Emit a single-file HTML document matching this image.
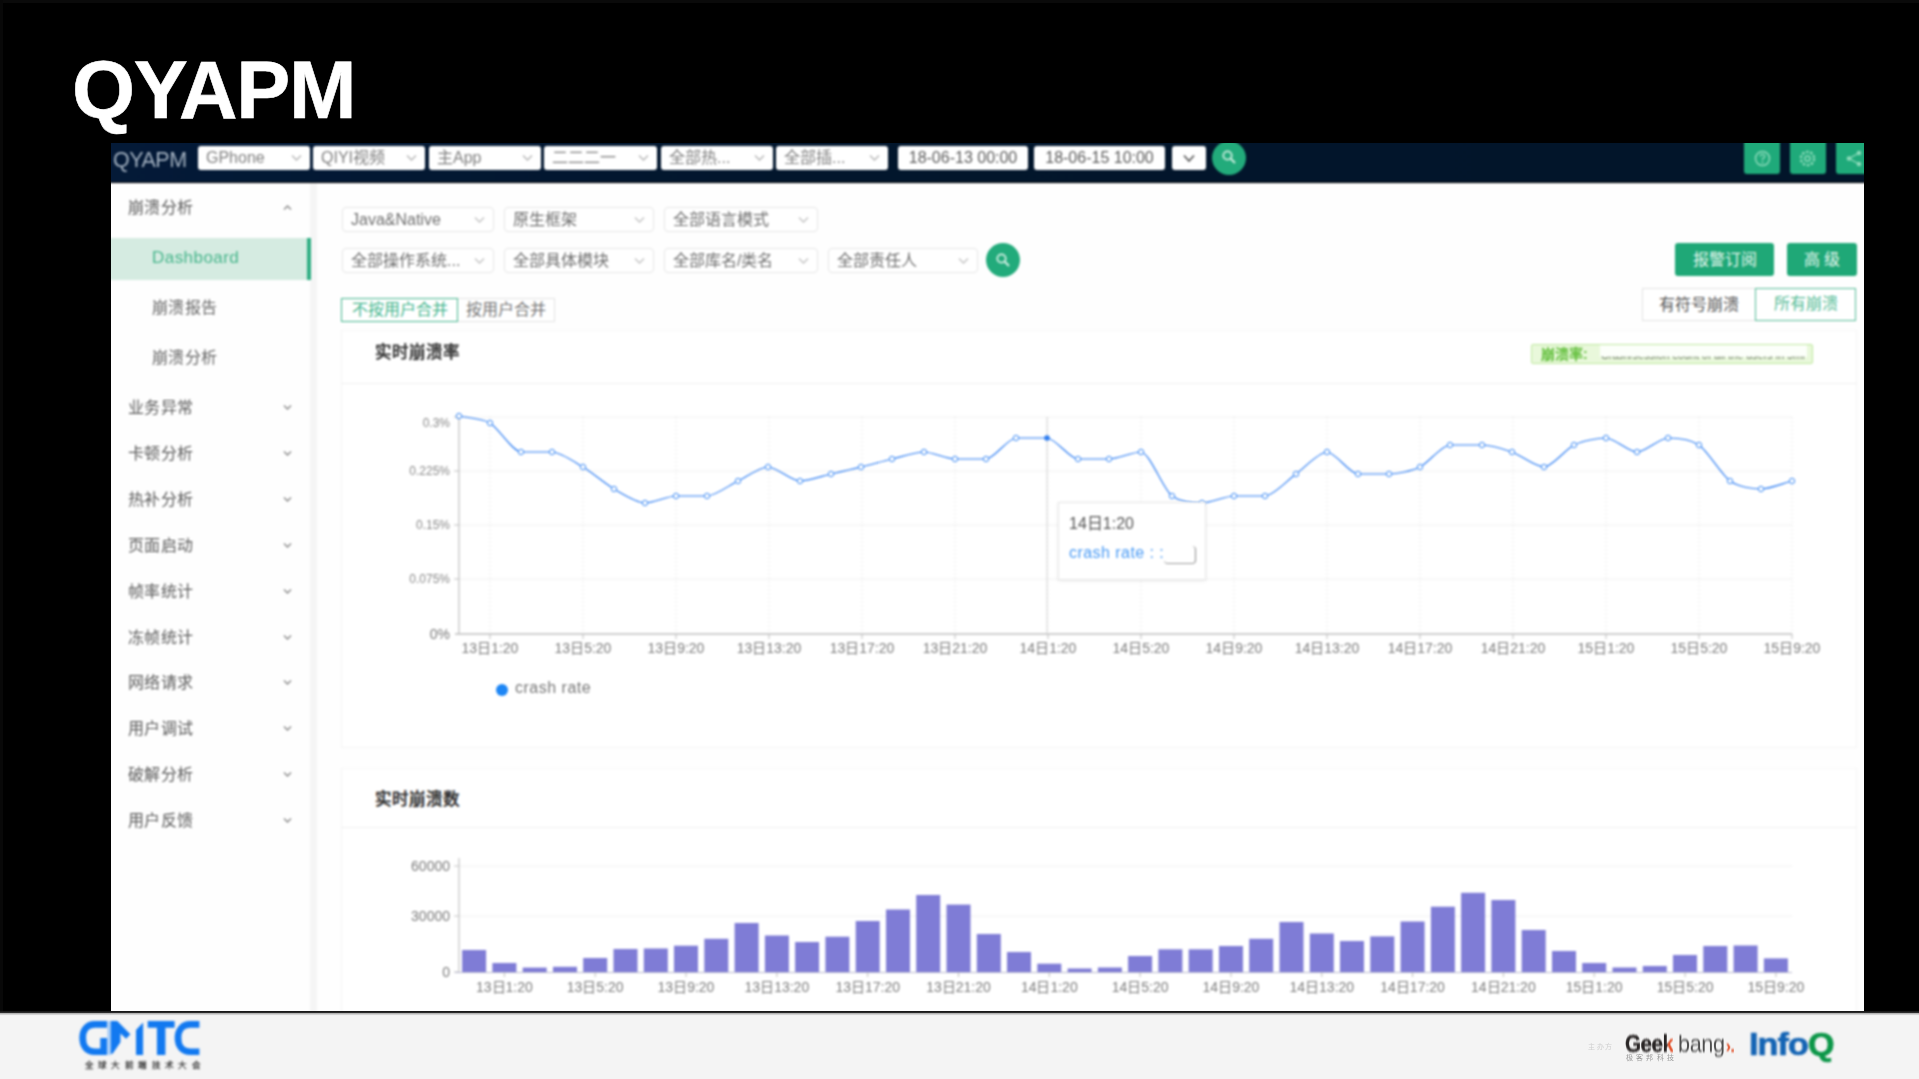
<!DOCTYPE html>
<html lang="zh-CN">
<head>
<meta charset="utf-8">
<title>QYAPM</title>
<style>
*{box-sizing:border-box;margin:0;padding:0}
html,body{width:1919px;height:1079px;overflow:hidden;background:#000}
body{position:relative;font-family:"Liberation Sans",sans-serif;color:#555}
body:before{content:"";position:absolute;left:0;top:0;width:1919px;height:2.5px;background:#0a0a0a}
body:after{content:"";position:absolute;left:0;top:0;width:2.5px;height:1011px;background:#080808}
#title{-webkit-text-stroke:.6px #fff;position:absolute;left:72px;top:44px;font-size:81px;line-height:92px;font-weight:700;color:#fff;letter-spacing:-1.3px;white-space:nowrap}
#shot{position:absolute;left:0;top:0;width:1919px;height:1079px;clip-path:inset(143px 55px 68px 111px);filter:blur(1.1px)}
#shot>*,#shot2>*,#tip>*{position:absolute}
#shot2{position:absolute;left:0;top:0;width:1919px;height:1079px;clip-path:inset(143px 55px 68px 111px)}
#tip{left:0;top:0;width:1919px;height:1079px;filter:blur(1px)}
#white{left:100px;top:183px;width:1780px;height:850px;background:#fefefe}
#nav{left:100px;top:130px;width:1780px;height:52px;background:linear-gradient(90deg,#041a38,#02162c 40%,#02152a)}
#brand{left:113px;top:147px;font-size:21.5px;line-height:26px;color:#a3b1c0;letter-spacing:-.5px}
.ns{top:146px;height:24px;background:#fff;border-radius:3px;font-size:16px;line-height:24px;color:#808080;padding-left:8px;white-space:nowrap;overflow:hidden}
.ns svg,.fs svg{position:absolute;right:8px;top:8px}
.fs{height:25px;background:#fff;border:1px solid #e6e6e6;border-radius:4px;font-size:16px;line-height:23px;color:#707070;padding-left:8px;white-space:nowrap;overflow:hidden}
.gb{top:136px;height:38px;background:#1faa7a;border-radius:3px}
.circ{width:34px;height:34px;border-radius:50%;background:#22ab7b}
#sideline{left:310px;top:183px;width:7px;height:850px;background:#f5f5f5}
.sm{left:128px;font-size:16px;line-height:20px;letter-spacing:.4px;color:#5c5c5c;white-space:nowrap}
.ss{left:152px;font-size:16px;line-height:20px;letter-spacing:.4px;color:#666;white-space:nowrap}
.chev{left:283px}
#active{left:100px;top:237.5px;width:211px;height:42px;background:#d5ebe1;border-right:4px solid #2fae83}
.card{left:341px;width:1516px;background:#fff;border:1px solid #f4f4f4;border-top-color:#f8f8f8}
.ct{left:375px;font-size:16.5px;line-height:20px;font-weight:700;color:#333;white-space:nowrap}
.xl{width:80px;text-align:center;font-size:14px;line-height:16px;color:#7c7c7c;white-space:nowrap}
.yl{width:60px;text-align:right;font-size:14px;line-height:14px;color:#7a7a7a;white-space:nowrap}
.btn{top:243px;height:33px;background:#1fa877;border-radius:3px;color:#e6f7ef;font-size:16px;line-height:33px;text-align:center;white-space:nowrap}
.tg{height:33px;border:1px solid #e2e2e2;font-size:16px;line-height:31px;text-align:center;color:#555;background:#fff;white-space:nowrap}
.tl{top:298px;height:24px;border:1px solid #e3e3e3;font-size:16px;line-height:22px;text-align:center;color:#777;background:#fff;white-space:nowrap}
#foot{position:absolute;left:0;top:1011px;width:1919px;height:68px;background:#f4f4f4}
#foot>*{position:absolute}
</style>
</head>
<body>
<div id="title">QYAPM</div>

<div id="shot">
  <div id="white"></div>
  <div id="nav"></div>
  <div id="brand">QYAPM</div>
  <div class="ns" style="left:198px;width:112px">GPhone<svg width="11" height="8" viewBox="0 0 11 8"><path d="M1 1.5 L5.5 6 L10 1.5" fill="none" stroke="#b5b5b5" stroke-width="1.3"/></svg></div>
  <div class="ns" style="left:313px;width:112px">QIYI视频<svg width="11" height="8" viewBox="0 0 11 8"><path d="M1 1.5 L5.5 6 L10 1.5" fill="none" stroke="#b5b5b5" stroke-width="1.3"/></svg></div>
  <div class="ns" style="left:429px;width:112px">主App<svg width="11" height="8" viewBox="0 0 11 8"><path d="M1 1.5 L5.5 6 L10 1.5" fill="none" stroke="#b5b5b5" stroke-width="1.3"/></svg></div>
  <div class="ns" style="left:544px;width:113px">二二二一<svg width="11" height="8" viewBox="0 0 11 8"><path d="M1 1.5 L5.5 6 L10 1.5" fill="none" stroke="#b5b5b5" stroke-width="1.3"/></svg></div>
  <div class="ns" style="left:661px;width:112px">全部热...<svg width="11" height="8" viewBox="0 0 11 8"><path d="M1 1.5 L5.5 6 L10 1.5" fill="none" stroke="#b5b5b5" stroke-width="1.3"/></svg></div>
  <div class="ns" style="left:776px;width:112px">全部插...<svg width="11" height="8" viewBox="0 0 11 8"><path d="M1 1.5 L5.5 6 L10 1.5" fill="none" stroke="#b5b5b5" stroke-width="1.3"/></svg></div>
  <div class="ns" style="left:898px;width:130px;color:#5c5c5c;padding-left:0;text-align:center;font-size:16px">18-06-13 00:00</div>
  <div class="ns" style="left:1034px;width:131px;color:#5c5c5c;padding-left:0;text-align:center;font-size:16px">18-06-15 10:00</div>
  <div class="ns" style="left:1172px;width:34px;padding:0"><svg style="right:11px;top:8px" width="12" height="9" viewBox="0 0 12 9"><path d="M1 1.5 L6 7 L11 1.5" fill="none" stroke="#555" stroke-width="1.6"/></svg></div>
  <div class="circ" style="left:1212px;top:141px"></div>
  <svg style="left:1221px;top:149px" width="16" height="16" viewBox="0 0 16 16"><circle cx="6.5" cy="6.5" r="4.2" fill="none" stroke="#cdeee0" stroke-width="1.8"/><path d="M9.8 9.8 L14 14" stroke="#cdeee0" stroke-width="2"/></svg>
  <div class="gb" style="left:1743.5px;width:36.5px"></div>
  <div class="gb" style="left:1790px;width:36px"></div>
  <div class="gb" style="left:1836px;width:40px"></div>
  <svg style="left:1753px;top:149px" width="19" height="19" viewBox="0 0 19 19"><circle cx="9.5" cy="9.5" r="7" fill="none" stroke="#8fdcbc" stroke-width="1.5"/><path d="M7.3 7.6 Q7.3 5.4 9.5 5.4 Q11.7 5.4 11.7 7.4 Q11.7 8.8 9.5 9.8 L9.5 11" fill="none" stroke="#8fdcbc" stroke-width="1.4"/><circle cx="9.5" cy="13.3" r="1" fill="#8fdcbc"/></svg>
  <svg style="left:1798px;top:149px" width="19" height="19" viewBox="0 0 19 19"><circle cx="9.5" cy="9.5" r="6.6" fill="none" stroke="#8fdcbc" stroke-width="2.4" stroke-dasharray="2.6 1.6"/><circle cx="9.5" cy="9.5" r="2.6" fill="none" stroke="#8fdcbc" stroke-width="1.5"/></svg>
  <svg style="left:1845px;top:149px" width="19" height="19" viewBox="0 0 19 19"><circle cx="4" cy="9.5" r="2.3" fill="#8fdcbc"/><circle cx="14" cy="4" r="2.3" fill="#8fdcbc"/><circle cx="14" cy="15" r="2.3" fill="#8fdcbc"/><path d="M14 4 L4 9.5 L14 15" fill="none" stroke="#8fdcbc" stroke-width="1.4"/></svg>

  <div id="sideline"></div>
  <div class="sm" style="top:198px">崩溃分析</div>
  <svg class="chev" style="top:204px" width="9" height="7" viewBox="0 0 9 7"><path d="M1 5.5 L4.5 2 L8 5.5" fill="none" stroke="#8a8a8a" stroke-width="1.4"/></svg>
  <div id="active"></div>
  <div class="ss" style="top:248px;color:#46b58b;font-size:17px;letter-spacing:.45px">Dashboard</div>
  <div class="ss" style="top:298px">崩溃报告</div>
  <div class="ss" style="top:348px">崩溃分析</div>
<div class="sm" style="top:398.0px">业务异常</div><svg class="chev" style="top:404.0px" width="9" height="7" viewBox="0 0 9 7"><path d="M1 1.5 L4.5 5 L8 1.5" fill="none" stroke="#8a8a8a" stroke-width="1.4"/></svg>
<div class="sm" style="top:443.9px">卡顿分析</div><svg class="chev" style="top:449.9px" width="9" height="7" viewBox="0 0 9 7"><path d="M1 1.5 L4.5 5 L8 1.5" fill="none" stroke="#8a8a8a" stroke-width="1.4"/></svg>
<div class="sm" style="top:489.8px">热补分析</div><svg class="chev" style="top:495.8px" width="9" height="7" viewBox="0 0 9 7"><path d="M1 1.5 L4.5 5 L8 1.5" fill="none" stroke="#8a8a8a" stroke-width="1.4"/></svg>
<div class="sm" style="top:535.7px">页面启动</div><svg class="chev" style="top:541.7px" width="9" height="7" viewBox="0 0 9 7"><path d="M1 1.5 L4.5 5 L8 1.5" fill="none" stroke="#8a8a8a" stroke-width="1.4"/></svg>
<div class="sm" style="top:581.6px">帧率统计</div><svg class="chev" style="top:587.6px" width="9" height="7" viewBox="0 0 9 7"><path d="M1 1.5 L4.5 5 L8 1.5" fill="none" stroke="#8a8a8a" stroke-width="1.4"/></svg>
<div class="sm" style="top:627.5px">冻帧统计</div><svg class="chev" style="top:633.5px" width="9" height="7" viewBox="0 0 9 7"><path d="M1 1.5 L4.5 5 L8 1.5" fill="none" stroke="#8a8a8a" stroke-width="1.4"/></svg>
<div class="sm" style="top:673.4px">网络请求</div><svg class="chev" style="top:679.4px" width="9" height="7" viewBox="0 0 9 7"><path d="M1 1.5 L4.5 5 L8 1.5" fill="none" stroke="#8a8a8a" stroke-width="1.4"/></svg>
<div class="sm" style="top:719.3px">用户调试</div><svg class="chev" style="top:725.3px" width="9" height="7" viewBox="0 0 9 7"><path d="M1 1.5 L4.5 5 L8 1.5" fill="none" stroke="#8a8a8a" stroke-width="1.4"/></svg>
<div class="sm" style="top:765.2px">破解分析</div><svg class="chev" style="top:771.2px" width="9" height="7" viewBox="0 0 9 7"><path d="M1 1.5 L4.5 5 L8 1.5" fill="none" stroke="#8a8a8a" stroke-width="1.4"/></svg>
<div class="sm" style="top:811.1px">用户反馈</div><svg class="chev" style="top:817.1px" width="9" height="7" viewBox="0 0 9 7"><path d="M1 1.5 L4.5 5 L8 1.5" fill="none" stroke="#8a8a8a" stroke-width="1.4"/></svg>

  <div class="fs" style="left:342px;top:207px;width:152px">Java&amp;Native<svg width="11" height="8" viewBox="0 0 11 8"><path d="M1 1.5 L5.5 6 L10 1.5" fill="none" stroke="#c2c2c2" stroke-width="1.3"/></svg></div>
  <div class="fs" style="left:504px;top:207px;width:150px">原生框架<svg width="11" height="8" viewBox="0 0 11 8"><path d="M1 1.5 L5.5 6 L10 1.5" fill="none" stroke="#c2c2c2" stroke-width="1.3"/></svg></div>
  <div class="fs" style="left:664px;top:207px;width:154px">全部语言模式<svg width="11" height="8" viewBox="0 0 11 8"><path d="M1 1.5 L5.5 6 L10 1.5" fill="none" stroke="#c2c2c2" stroke-width="1.3"/></svg></div>
  <div class="fs" style="left:342px;top:248px;width:152px">全部操作系统...<svg width="11" height="8" viewBox="0 0 11 8"><path d="M1 1.5 L5.5 6 L10 1.5" fill="none" stroke="#c2c2c2" stroke-width="1.3"/></svg></div>
  <div class="fs" style="left:504px;top:248px;width:150px">全部具体模块<svg width="11" height="8" viewBox="0 0 11 8"><path d="M1 1.5 L5.5 6 L10 1.5" fill="none" stroke="#c2c2c2" stroke-width="1.3"/></svg></div>
  <div class="fs" style="left:664px;top:248px;width:154px">全部库名/类名<svg width="11" height="8" viewBox="0 0 11 8"><path d="M1 1.5 L5.5 6 L10 1.5" fill="none" stroke="#c2c2c2" stroke-width="1.3"/></svg></div>
  <div class="fs" style="left:828px;top:248px;width:150px">全部责任人<svg width="11" height="8" viewBox="0 0 11 8"><path d="M1 1.5 L5.5 6 L10 1.5" fill="none" stroke="#c2c2c2" stroke-width="1.3"/></svg></div>
  <div class="circ" style="left:986px;top:243px"></div>
  <svg style="left:995px;top:252px" width="16" height="16" viewBox="0 0 16 16"><circle cx="6.5" cy="6.5" r="4.2" fill="none" stroke="#d6f1e6" stroke-width="1.8"/><path d="M9.8 9.8 L14 14" stroke="#d6f1e6" stroke-width="2"/></svg>

  <div class="btn" style="left:1675px;width:99px">报警订阅</div>
  <div class="btn" style="left:1787px;width:70px">高 级</div>
  <div class="tg" style="left:1642px;top:288px;width:114px">有符号崩溃</div>
  <div class="tg" style="left:1755px;top:288px;width:101px;border:1.5px solid #55bb96;line-height:30px;color:#55bb96">所有崩溃</div>
  <div class="tl" style="left:341px;width:117px;border-color:#43b58d;color:#43b58d;z-index:1">不按用户合并</div>
  <div class="tl" style="left:457px;width:98px">按用户合并</div>

  <div class="card" style="top:330px;height:418px"></div>
  <div style="left:342px;top:383px;width:1515px;height:1px;background:#efefef"></div>
  <div class="ct" style="top:342px">实时崩溃率</div>
  <div style="left:1531px;top:344px;width:282px;height:20px;background:#e9f8db;border:1px solid #bfe9a0;border-radius:2px;font-size:14px;line-height:18px;color:#62bf3c;font-weight:700;padding-left:9px;white-space:nowrap;overflow:hidden">崩溃率:</div>
  <div style="left:1600px;top:345px;width:207px;height:12px;background:#fcfffa"></div>
  <div style="left:1601px;top:349px;width:204px;font-size:10.5px;line-height:12px;letter-spacing:.15px;color:#5f6b5a;white-space:nowrap;overflow:hidden;height:12px;clip-path:inset(7.5px 0 0 0)">Crash/session count of all the users in 5min</div>

  <svg style="left:0;top:0" width="1919" height="1079" viewBox="0 0 1919 1079">
<line x1="459" y1="417" x2="1792" y2="417" stroke="#f0f0f0" stroke-width="1"/>
<line x1="459" y1="471" x2="1792" y2="471" stroke="#f0f0f0" stroke-width="1"/>
<line x1="459" y1="525" x2="1792" y2="525" stroke="#f0f0f0" stroke-width="1"/>
<line x1="459" y1="579" x2="1792" y2="579" stroke="#f0f0f0" stroke-width="1"/>
<line x1="490" y1="417" x2="490" y2="634" stroke="#eeeeee" stroke-width="1" stroke-dasharray="2 2"/>
<line x1="490" y1="634" x2="490" y2="639" stroke="#bdbdbd" stroke-width="1"/>
<line x1="583" y1="417" x2="583" y2="634" stroke="#eeeeee" stroke-width="1" stroke-dasharray="2 2"/>
<line x1="583" y1="634" x2="583" y2="639" stroke="#bdbdbd" stroke-width="1"/>
<line x1="676" y1="417" x2="676" y2="634" stroke="#eeeeee" stroke-width="1" stroke-dasharray="2 2"/>
<line x1="676" y1="634" x2="676" y2="639" stroke="#bdbdbd" stroke-width="1"/>
<line x1="769" y1="417" x2="769" y2="634" stroke="#eeeeee" stroke-width="1" stroke-dasharray="2 2"/>
<line x1="769" y1="634" x2="769" y2="639" stroke="#bdbdbd" stroke-width="1"/>
<line x1="862" y1="417" x2="862" y2="634" stroke="#eeeeee" stroke-width="1" stroke-dasharray="2 2"/>
<line x1="862" y1="634" x2="862" y2="639" stroke="#bdbdbd" stroke-width="1"/>
<line x1="955" y1="417" x2="955" y2="634" stroke="#eeeeee" stroke-width="1" stroke-dasharray="2 2"/>
<line x1="955" y1="634" x2="955" y2="639" stroke="#bdbdbd" stroke-width="1"/>
<line x1="1048" y1="417" x2="1048" y2="634" stroke="#eeeeee" stroke-width="1" stroke-dasharray="2 2"/>
<line x1="1048" y1="634" x2="1048" y2="639" stroke="#bdbdbd" stroke-width="1"/>
<line x1="1141" y1="417" x2="1141" y2="634" stroke="#eeeeee" stroke-width="1" stroke-dasharray="2 2"/>
<line x1="1141" y1="634" x2="1141" y2="639" stroke="#bdbdbd" stroke-width="1"/>
<line x1="1234" y1="417" x2="1234" y2="634" stroke="#eeeeee" stroke-width="1" stroke-dasharray="2 2"/>
<line x1="1234" y1="634" x2="1234" y2="639" stroke="#bdbdbd" stroke-width="1"/>
<line x1="1327" y1="417" x2="1327" y2="634" stroke="#eeeeee" stroke-width="1" stroke-dasharray="2 2"/>
<line x1="1327" y1="634" x2="1327" y2="639" stroke="#bdbdbd" stroke-width="1"/>
<line x1="1420" y1="417" x2="1420" y2="634" stroke="#eeeeee" stroke-width="1" stroke-dasharray="2 2"/>
<line x1="1420" y1="634" x2="1420" y2="639" stroke="#bdbdbd" stroke-width="1"/>
<line x1="1513" y1="417" x2="1513" y2="634" stroke="#eeeeee" stroke-width="1" stroke-dasharray="2 2"/>
<line x1="1513" y1="634" x2="1513" y2="639" stroke="#bdbdbd" stroke-width="1"/>
<line x1="1606" y1="417" x2="1606" y2="634" stroke="#eeeeee" stroke-width="1" stroke-dasharray="2 2"/>
<line x1="1606" y1="634" x2="1606" y2="639" stroke="#bdbdbd" stroke-width="1"/>
<line x1="1699" y1="417" x2="1699" y2="634" stroke="#eeeeee" stroke-width="1" stroke-dasharray="2 2"/>
<line x1="1699" y1="634" x2="1699" y2="639" stroke="#bdbdbd" stroke-width="1"/>
<line x1="1792" y1="417" x2="1792" y2="634" stroke="#eeeeee" stroke-width="1" stroke-dasharray="2 2"/>
<line x1="1792" y1="634" x2="1792" y2="639" stroke="#bdbdbd" stroke-width="1"/>
<line x1="459" y1="415" x2="459" y2="634" stroke="#bfbfbf" stroke-width="1.2"/>
<line x1="455" y1="634" x2="1792" y2="634" stroke="#bfbfbf" stroke-width="1.4"/>
<line x1="454" y1="417" x2="459" y2="417" stroke="#bfbfbf" stroke-width="1"/>
<line x1="454" y1="471" x2="459" y2="471" stroke="#bfbfbf" stroke-width="1"/>
<line x1="454" y1="525" x2="459" y2="525" stroke="#bfbfbf" stroke-width="1"/>
<line x1="454" y1="579" x2="459" y2="579" stroke="#bfbfbf" stroke-width="1"/>
<line x1="1047" y1="417" x2="1047" y2="634" stroke="#d4d4d4" stroke-width="1"/>
  </svg>
  <div class="yl" style="left:390px;top:416px;font-size:12px;color:#888">0.3%</div>
  <div class="yl" style="left:390px;top:464px;font-size:12px;color:#888">0.225%</div>
  <div class="yl" style="left:390px;top:518px;font-size:12px;color:#888">0.15%</div>
  <div class="yl" style="left:390px;top:572px;font-size:12px;color:#888">0.075%</div>
  <div class="yl" style="left:390px;top:627px">0%</div>
<div class="xl" style="left:450px;top:640px">13日1:20</div>
<div class="xl" style="left:543px;top:640px">13日5:20</div>
<div class="xl" style="left:636px;top:640px">13日9:20</div>
<div class="xl" style="left:729px;top:640px">13日13:20</div>
<div class="xl" style="left:822px;top:640px">13日17:20</div>
<div class="xl" style="left:915px;top:640px">13日21:20</div>
<div class="xl" style="left:1008px;top:640px">14日1:20</div>
<div class="xl" style="left:1101px;top:640px">14日5:20</div>
<div class="xl" style="left:1194px;top:640px">14日9:20</div>
<div class="xl" style="left:1287px;top:640px">14日13:20</div>
<div class="xl" style="left:1380px;top:640px">14日17:20</div>
<div class="xl" style="left:1473px;top:640px">14日21:20</div>
<div class="xl" style="left:1566px;top:640px">15日1:20</div>
<div class="xl" style="left:1659px;top:640px">15日5:20</div>
<div class="xl" style="left:1752px;top:640px">15日9:20</div>
  <div style="left:496px;top:684px;width:12px;height:12px;border-radius:50%;background:#1d86f5"></div>
  <div style="left:515px;top:679px;font-size:16px;line-height:18px;letter-spacing:.5px;color:#777;white-space:nowrap">crash rate</div>
  <div class="card" style="top:768px;height:260px"></div>
  <div style="left:342px;top:827px;width:1515px;height:1px;background:#efefef"></div>
  <div class="ct" style="top:789px">实时崩溃数</div>
  <svg style="left:0;top:0" width="1919" height="1079" viewBox="0 0 1919 1079">
<line x1="459" y1="866" x2="1792" y2="866" stroke="#f0f0f0" stroke-width="1"/>
<line x1="459" y1="916" x2="1792" y2="916" stroke="#f0f0f0" stroke-width="1"/>
<line x1="459" y1="858" x2="459" y2="972" stroke="#c4c4c4" stroke-width="1.2"/>
<line x1="454" y1="866" x2="459" y2="866" stroke="#c4c4c4" stroke-width="1"/>
<line x1="454" y1="916" x2="459" y2="916" stroke="#c4c4c4" stroke-width="1"/>
<line x1="454" y1="972" x2="459" y2="972" stroke="#c4c4c4" stroke-width="1"/>
<rect x="462.1" y="950.0" width="24" height="22.5" fill="#7f7cd6"/>
<rect x="492.4" y="963.0" width="24" height="9.5" fill="#7f7cd6"/>
<rect x="522.7" y="967.6" width="24" height="4.9" fill="#7f7cd6"/>
<rect x="553.0" y="966.8" width="24" height="5.7" fill="#7f7cd6"/>
<rect x="583.2" y="958.0" width="24" height="14.5" fill="#7f7cd6"/>
<rect x="613.5" y="949.0" width="24" height="23.5" fill="#7f7cd6"/>
<rect x="643.8" y="948.5" width="24" height="24.0" fill="#7f7cd6"/>
<rect x="674.0" y="945.7" width="24" height="26.8" fill="#7f7cd6"/>
<rect x="704.3" y="938.8" width="24" height="33.7" fill="#7f7cd6"/>
<rect x="734.6" y="923.0" width="24" height="49.5" fill="#7f7cd6"/>
<rect x="764.9" y="935.5" width="24" height="37.0" fill="#7f7cd6"/>
<rect x="795.1" y="942.0" width="24" height="30.5" fill="#7f7cd6"/>
<rect x="825.4" y="936.7" width="24" height="35.8" fill="#7f7cd6"/>
<rect x="855.7" y="921.0" width="24" height="51.5" fill="#7f7cd6"/>
<rect x="886.0" y="909.5" width="24" height="63.0" fill="#7f7cd6"/>
<rect x="916.2" y="895.0" width="24" height="77.5" fill="#7f7cd6"/>
<rect x="946.5" y="904.6" width="24" height="67.9" fill="#7f7cd6"/>
<rect x="976.8" y="934.0" width="24" height="38.5" fill="#7f7cd6"/>
<rect x="1007.0" y="952.0" width="24" height="20.5" fill="#7f7cd6"/>
<rect x="1037.3" y="963.7" width="24" height="8.8" fill="#7f7cd6"/>
<rect x="1067.6" y="968.5" width="24" height="4.0" fill="#7f7cd6"/>
<rect x="1097.9" y="967.5" width="24" height="5.0" fill="#7f7cd6"/>
<rect x="1128.1" y="956.0" width="24" height="16.5" fill="#7f7cd6"/>
<rect x="1158.4" y="949.3" width="24" height="23.2" fill="#7f7cd6"/>
<rect x="1188.7" y="949.3" width="24" height="23.2" fill="#7f7cd6"/>
<rect x="1219.0" y="946.0" width="24" height="26.5" fill="#7f7cd6"/>
<rect x="1249.2" y="938.8" width="24" height="33.7" fill="#7f7cd6"/>
<rect x="1279.5" y="922.0" width="24" height="50.5" fill="#7f7cd6"/>
<rect x="1309.8" y="933.5" width="24" height="39.0" fill="#7f7cd6"/>
<rect x="1340.0" y="941.0" width="24" height="31.5" fill="#7f7cd6"/>
<rect x="1370.3" y="936.4" width="24" height="36.1" fill="#7f7cd6"/>
<rect x="1400.6" y="921.5" width="24" height="51.0" fill="#7f7cd6"/>
<rect x="1430.9" y="906.7" width="24" height="65.8" fill="#7f7cd6"/>
<rect x="1461.1" y="892.8" width="24" height="79.7" fill="#7f7cd6"/>
<rect x="1491.4" y="900.0" width="24" height="72.5" fill="#7f7cd6"/>
<rect x="1521.7" y="930.0" width="24" height="42.5" fill="#7f7cd6"/>
<rect x="1552.0" y="951.0" width="24" height="21.5" fill="#7f7cd6"/>
<rect x="1582.2" y="963.0" width="24" height="9.5" fill="#7f7cd6"/>
<rect x="1612.5" y="967.5" width="24" height="5.0" fill="#7f7cd6"/>
<rect x="1642.8" y="966.0" width="24" height="6.5" fill="#7f7cd6"/>
<rect x="1673.0" y="955.0" width="24" height="17.5" fill="#7f7cd6"/>
<rect x="1703.3" y="946.0" width="24" height="26.5" fill="#7f7cd6"/>
<rect x="1733.6" y="945.5" width="24" height="27.0" fill="#7f7cd6"/>
<rect x="1763.9" y="958.4" width="24" height="14.1" fill="#7f7cd6"/>
<line x1="455" y1="972.5" x2="1792" y2="972.5" stroke="#b9b9cf" stroke-width="1.2"/>
<line x1="504.4" y1="972" x2="504.4" y2="977" stroke="#bdbdbd" stroke-width="1"/>
<line x1="595.2" y1="972" x2="595.2" y2="977" stroke="#bdbdbd" stroke-width="1"/>
<line x1="686.0" y1="972" x2="686.0" y2="977" stroke="#bdbdbd" stroke-width="1"/>
<line x1="776.9" y1="972" x2="776.9" y2="977" stroke="#bdbdbd" stroke-width="1"/>
<line x1="867.7" y1="972" x2="867.7" y2="977" stroke="#bdbdbd" stroke-width="1"/>
<line x1="958.5" y1="972" x2="958.5" y2="977" stroke="#bdbdbd" stroke-width="1"/>
<line x1="1049.3" y1="972" x2="1049.3" y2="977" stroke="#bdbdbd" stroke-width="1"/>
<line x1="1140.1" y1="972" x2="1140.1" y2="977" stroke="#bdbdbd" stroke-width="1"/>
<line x1="1231.0" y1="972" x2="1231.0" y2="977" stroke="#bdbdbd" stroke-width="1"/>
<line x1="1321.8" y1="972" x2="1321.8" y2="977" stroke="#bdbdbd" stroke-width="1"/>
<line x1="1412.6" y1="972" x2="1412.6" y2="977" stroke="#bdbdbd" stroke-width="1"/>
<line x1="1503.4" y1="972" x2="1503.4" y2="977" stroke="#bdbdbd" stroke-width="1"/>
<line x1="1594.2" y1="972" x2="1594.2" y2="977" stroke="#bdbdbd" stroke-width="1"/>
<line x1="1685.1" y1="972" x2="1685.1" y2="977" stroke="#bdbdbd" stroke-width="1"/>
<line x1="1775.9" y1="972" x2="1775.9" y2="977" stroke="#bdbdbd" stroke-width="1"/>
  </svg>
  <div class="yl" style="left:390px;top:859px">60000</div>
  <div class="yl" style="left:390px;top:909px">30000</div>
  <div class="yl" style="left:390px;top:965px">0</div>
<div class="xl" style="left:464.4px;top:979px">13日1:20</div>
<div class="xl" style="left:555.2px;top:979px">13日5:20</div>
<div class="xl" style="left:646.0px;top:979px">13日9:20</div>
<div class="xl" style="left:736.9px;top:979px">13日13:20</div>
<div class="xl" style="left:827.7px;top:979px">13日17:20</div>
<div class="xl" style="left:918.5px;top:979px">13日21:20</div>
<div class="xl" style="left:1009.3px;top:979px">14日1:20</div>
<div class="xl" style="left:1100.1px;top:979px">14日5:20</div>
<div class="xl" style="left:1191.0px;top:979px">14日9:20</div>
<div class="xl" style="left:1281.8px;top:979px">14日13:20</div>
<div class="xl" style="left:1372.6px;top:979px">14日17:20</div>
<div class="xl" style="left:1463.4px;top:979px">14日21:20</div>
<div class="xl" style="left:1554.2px;top:979px">15日1:20</div>
<div class="xl" style="left:1645.1px;top:979px">15日5:20</div>
<div class="xl" style="left:1735.9px;top:979px">15日9:20</div>
</div>

<div id="shot2">
  <svg style="left:0;top:0;filter:blur(.8px)" width="1919" height="1079" viewBox="0 0 1919 1079">
<path d="M459,416 C467.3,417.9 481.7,418.2 490,423 C498.3,427.8 512.7,452.0 521,452 C529.3,452.0 543.7,452.0 552,452 C560.3,452.0 574.7,462.1 583,467 C591.3,471.9 605.7,484.2 614,489 C622.3,493.8 636.7,503.0 645,503 C653.3,503.0 667.7,496.0 676,496 C684.3,496.0 698.7,496.0 707,496 C715.3,496.0 729.7,484.9 738,481 C746.0,477.2 760.0,467.0 768,467 C776.5,467.0 791.5,481.0 800,481 C808.3,481.0 822.7,475.9 831,474 C839.0,472.2 853.0,469.0 861,467 C869.3,465.0 883.7,461.0 892,459 C900.5,457.0 915.5,452.0 924,452 C932.3,452.0 946.7,459.0 955,459 C963.3,459.0 977.7,459.0 986,459 C994.0,459.0 1008.0,438.0 1016,438 C1024.3,438.0 1038.7,438.0 1047,438 C1055.3,438.0 1069.7,459.0 1078,459 C1086.3,459.0 1100.7,459.0 1109,459 C1117.5,459.0 1132.5,452.0 1141,452 C1149.3,452.0 1163.7,490.2 1172,496 C1180.0,501.6 1194.0,503.0 1202,503 C1210.5,503.0 1225.5,496.0 1234,496 C1242.3,496.0 1256.7,496.0 1265,496 C1273.3,496.0 1287.7,479.9 1296,474 C1304.3,468.1 1318.7,452.0 1327,452 C1335.3,452.0 1349.7,474.0 1358,474 C1366.3,474.0 1380.7,474.0 1389,474 C1397.3,474.0 1411.7,471.0 1420,467 C1428.0,463.2 1442.0,445.0 1450,445 C1458.5,445.0 1473.5,445.0 1482,445 C1490.0,445.0 1504.0,449.2 1512,452 C1520.5,455.0 1535.5,467.0 1544,467 C1552.0,467.0 1566.0,448.8 1574,445 C1582.5,440.9 1597.5,438.0 1606,438 C1614.3,438.0 1628.7,452.0 1637,452 C1645.3,452.0 1659.7,438.0 1668,438 C1676.3,438.0 1690.7,439.4 1699,445 C1707.3,450.6 1721.7,475.1 1730,481 C1738.3,486.9 1752.7,489.0 1761,489 C1769.3,489.0 1783.7,483.1 1792,481" fill="none" stroke="#2a7bf2" stroke-width="1.15"/>
<circle cx="459" cy="416" r="2.7" fill="#ffffff" stroke="#3f8cf4" stroke-width="1"/>
<circle cx="490" cy="423" r="2.7" fill="#ffffff" stroke="#3f8cf4" stroke-width="1"/>
<circle cx="521" cy="452" r="2.7" fill="#ffffff" stroke="#3f8cf4" stroke-width="1"/>
<circle cx="552" cy="452" r="2.7" fill="#ffffff" stroke="#3f8cf4" stroke-width="1"/>
<circle cx="583" cy="467" r="2.7" fill="#ffffff" stroke="#3f8cf4" stroke-width="1"/>
<circle cx="614" cy="489" r="2.7" fill="#ffffff" stroke="#3f8cf4" stroke-width="1"/>
<circle cx="645" cy="503" r="2.7" fill="#ffffff" stroke="#3f8cf4" stroke-width="1"/>
<circle cx="676" cy="496" r="2.7" fill="#ffffff" stroke="#3f8cf4" stroke-width="1"/>
<circle cx="707" cy="496" r="2.7" fill="#ffffff" stroke="#3f8cf4" stroke-width="1"/>
<circle cx="738" cy="481" r="2.7" fill="#ffffff" stroke="#3f8cf4" stroke-width="1"/>
<circle cx="768" cy="467" r="2.7" fill="#ffffff" stroke="#3f8cf4" stroke-width="1"/>
<circle cx="800" cy="481" r="2.7" fill="#ffffff" stroke="#3f8cf4" stroke-width="1"/>
<circle cx="831" cy="474" r="2.7" fill="#ffffff" stroke="#3f8cf4" stroke-width="1"/>
<circle cx="861" cy="467" r="2.7" fill="#ffffff" stroke="#3f8cf4" stroke-width="1"/>
<circle cx="892" cy="459" r="2.7" fill="#ffffff" stroke="#3f8cf4" stroke-width="1"/>
<circle cx="924" cy="452" r="2.7" fill="#ffffff" stroke="#3f8cf4" stroke-width="1"/>
<circle cx="955" cy="459" r="2.7" fill="#ffffff" stroke="#3f8cf4" stroke-width="1"/>
<circle cx="986" cy="459" r="2.7" fill="#ffffff" stroke="#3f8cf4" stroke-width="1"/>
<circle cx="1016" cy="438" r="2.7" fill="#ffffff" stroke="#3f8cf4" stroke-width="1"/>
<circle cx="1047" cy="438" r="2.8" fill="#2e7df0"/>
<circle cx="1078" cy="459" r="2.7" fill="#ffffff" stroke="#3f8cf4" stroke-width="1"/>
<circle cx="1109" cy="459" r="2.7" fill="#ffffff" stroke="#3f8cf4" stroke-width="1"/>
<circle cx="1141" cy="452" r="2.7" fill="#ffffff" stroke="#3f8cf4" stroke-width="1"/>
<circle cx="1172" cy="496" r="2.7" fill="#ffffff" stroke="#3f8cf4" stroke-width="1"/>
<circle cx="1202" cy="503" r="2.7" fill="#ffffff" stroke="#3f8cf4" stroke-width="1"/>
<circle cx="1234" cy="496" r="2.7" fill="#ffffff" stroke="#3f8cf4" stroke-width="1"/>
<circle cx="1265" cy="496" r="2.7" fill="#ffffff" stroke="#3f8cf4" stroke-width="1"/>
<circle cx="1296" cy="474" r="2.7" fill="#ffffff" stroke="#3f8cf4" stroke-width="1"/>
<circle cx="1327" cy="452" r="2.7" fill="#ffffff" stroke="#3f8cf4" stroke-width="1"/>
<circle cx="1358" cy="474" r="2.7" fill="#ffffff" stroke="#3f8cf4" stroke-width="1"/>
<circle cx="1389" cy="474" r="2.7" fill="#ffffff" stroke="#3f8cf4" stroke-width="1"/>
<circle cx="1420" cy="467" r="2.7" fill="#ffffff" stroke="#3f8cf4" stroke-width="1"/>
<circle cx="1450" cy="445" r="2.7" fill="#ffffff" stroke="#3f8cf4" stroke-width="1"/>
<circle cx="1482" cy="445" r="2.7" fill="#ffffff" stroke="#3f8cf4" stroke-width="1"/>
<circle cx="1512" cy="452" r="2.7" fill="#ffffff" stroke="#3f8cf4" stroke-width="1"/>
<circle cx="1544" cy="467" r="2.7" fill="#ffffff" stroke="#3f8cf4" stroke-width="1"/>
<circle cx="1574" cy="445" r="2.7" fill="#ffffff" stroke="#3f8cf4" stroke-width="1"/>
<circle cx="1606" cy="438" r="2.7" fill="#ffffff" stroke="#3f8cf4" stroke-width="1"/>
<circle cx="1637" cy="452" r="2.7" fill="#ffffff" stroke="#3f8cf4" stroke-width="1"/>
<circle cx="1668" cy="438" r="2.7" fill="#ffffff" stroke="#3f8cf4" stroke-width="1"/>
<circle cx="1699" cy="445" r="2.7" fill="#ffffff" stroke="#3f8cf4" stroke-width="1"/>
<circle cx="1730" cy="481" r="2.7" fill="#ffffff" stroke="#3f8cf4" stroke-width="1"/>
<circle cx="1761" cy="489" r="2.7" fill="#ffffff" stroke="#3f8cf4" stroke-width="1"/>
<circle cx="1792" cy="481" r="2.7" fill="#ffffff" stroke="#3f8cf4" stroke-width="1"/>
  </svg>
  <div id="tip">
  <div style="left:1058px;top:502px;width:148px;height:78px;background:#fff;border:1px solid #e6e6e6;box-shadow:0 1px 4px rgba(0,0,0,.08)"></div>
  <div style="left:1069px;top:515px;font-size:16px;line-height:18px;color:#555;white-space:nowrap">14日1:20</div>
  <div style="left:1069px;top:544px;font-size:16px;line-height:18px;letter-spacing:.45px;color:#4a9bf5;white-space:nowrap">crash rate : :</div>
  <div style="left:1164px;top:546px;width:32px;height:18px;background:#fff;border-radius:4px;border-right:1.5px solid #8a8a8a;border-bottom:1.5px solid #9a9a9a;box-shadow:0 0 2px #fff"></div>

  </div>
</div>

<div id="foot">
  <div style="left:0;top:0;width:1919px;height:5px;background:linear-gradient(#181818 0,#1c1c1c 1.4px,#b0b0b0 2.4px,#f4f4f4 4.6px)"></div>
  <svg style="left:74px;top:3px;filter:blur(.9px)" width="136" height="60" viewBox="0 0 1919 847">
    <g fill="none" stroke="#1279f0" stroke-width="95" stroke-linejoin="miter">
      <path d="M465 147 L290 147 C180 147 122 230 122 340 C122 450 180 533 290 533 L418 533 L418 340"/>
      <path d="M1770 147 L1640 147 C1530 147 1468 230 1468 340 C1468 450 1530 533 1640 533 L1770 533"/>
    </g>
    <rect x="470" y="100" width="52" height="480" fill="#a9cef8"/>
    <g fill="#1279f0">
      <path d="M520 100 L610 100 L795 285 L735 350 L655 275 L655 400 L545 560 L520 560 Z"/>
      <path d="M875 225 L975 120 L975 580 L875 580 Z"/>
      <path d="M1040 100 L1420 100 L1420 195 L1290 195 L1290 580 L1170 580 L1170 195 L1040 195 Z"/>
    </g>
  </svg>
  <div style="left:84.6px;top:49px;font-size:8.5px;line-height:10px;letter-spacing:4.4px;color:#444;font-weight:700;white-space:nowrap;filter:blur(.9px)">全球大前端技术大会</div>
  <div style="left:1588px;top:32px;font-size:7px;line-height:8px;color:#cfcfcf;letter-spacing:1.6px;white-space:nowrap;filter:blur(.6px)">主办方</div>
  <div style="left:1625px;top:19px;font-size:24px;line-height:28px;color:#2a2626;font-weight:700;letter-spacing:-.6px;white-space:nowrap;filter:blur(.8px);transform:scaleX(.86);transform-origin:0 0;-webkit-text-stroke:.4px #2a2626">Gee<span style="background:linear-gradient(90deg,#2a2626 42%,#e2552f 42%);-webkit-background-clip:text;background-clip:text;color:transparent;-webkit-text-stroke:0">k</span></div>
  <div style="left:1678px;top:19px;font-size:24px;line-height:28px;color:#4f4f4f;white-space:nowrap;filter:blur(.8px);transform:scaleX(.9);transform-origin:0 0;letter-spacing:-.4px">bang<span style="color:#e2552f;font-size:19px;letter-spacing:-1px;margin-left:1px;font-weight:700">&#x203A;.</span></div>
  <div style="left:1626px;top:43px;font-size:7px;line-height:8px;color:#9a9a9a;letter-spacing:3.2px;white-space:nowrap;filter:blur(.7px)">极客邦科技</div>
  <div style="left:1749px;top:15.5px;font-size:31px;line-height:36px;color:#1464b4;font-weight:700;letter-spacing:-.8px;white-space:nowrap;filter:blur(.8px);transform:scaleX(1.1);transform-origin:0 0;-webkit-text-stroke:.7px #1464b4">Info<span style="color:#0c9648;-webkit-text-stroke:.7px #0c9648">Q</span></div>
</div>
</body>
</html>
